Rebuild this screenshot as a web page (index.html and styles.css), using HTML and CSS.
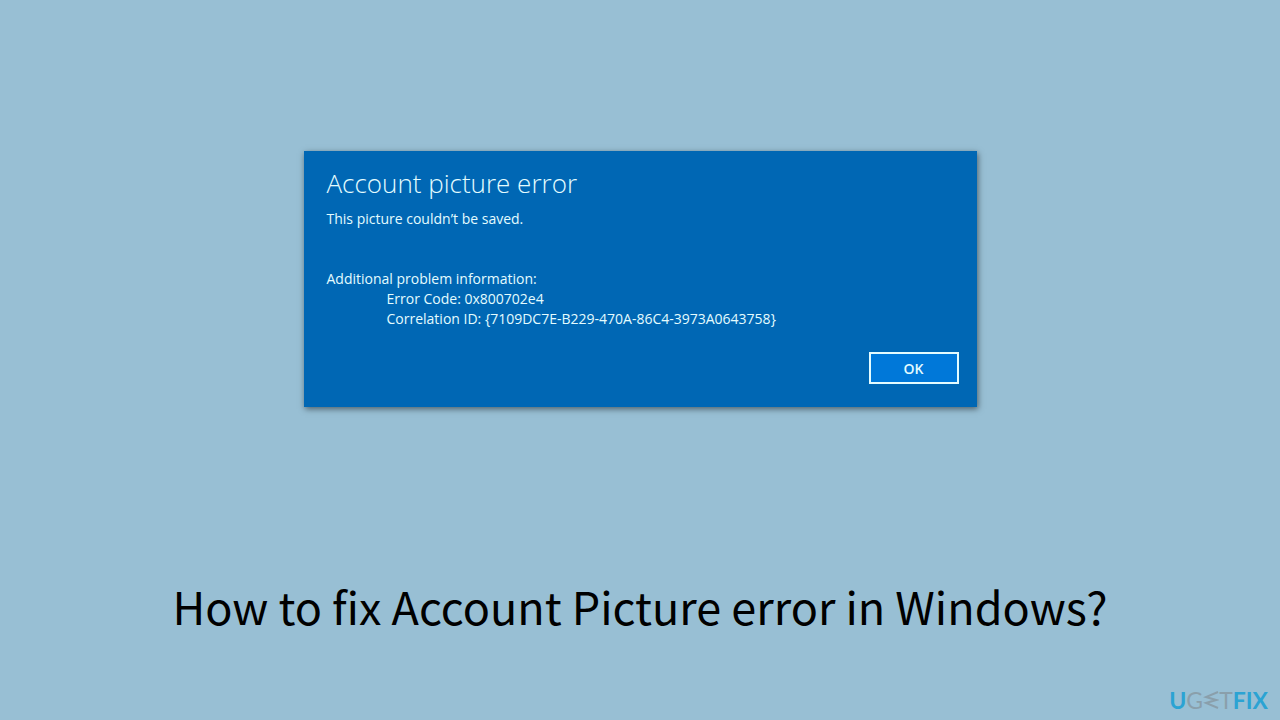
FILE: index.html
```html
<!DOCTYPE html>
<html lang="en">
<head>
  <meta charset="UTF-8">
  <meta name="viewport" content="width=device-width, initial-scale=1">
  <title>How to fix Account Picture error in Windows?</title>
  <link rel="stylesheet" href="styles.css">
</head>
<body>
  <main class="page">
    <section class="dialog" role="alertdialog" aria-labelledby="dialog-title" aria-describedby="dialog-message">
      <h2 class="dialog-title" id="dialog-title">Account picture error</h2>
      <p class="dialog-message" id="dialog-message">This picture couldn’t be saved.</p>
      <div class="details">
        <p>Additional problem information:</p>
        <ul class="details-list">
          <li>Error Code: 0x800702e4</li>
          <li>Correlation ID: {7109DC7E-B229-470A-86C4-3973A0643758}</li>
        </ul>
      </div>
      <div class="actions">
        <button type="button" class="ok-button">OK</button>
      </div>
    </section>
    <h1 class="headline">How to fix Account Picture error in Windows?</h1>
  </main>

  <footer class="footer">
    <div class="logo">
      <span>U</span><span class="logo-gray">G</span>
      <svg class="logo-mark" width="16" height="20" viewBox="0 0 16 20" role="img" aria-label="E">
        <path d="M15 2 L3 7 L13 10 L3 13 L15 18" fill="none" stroke="currentColor" stroke-width="2" />
      </svg>
      <span class="logo-gray">T</span><span>FIX</span>
    </div>
  </footer>
</body>
</html>
```

FILE: styles.css
```css
* {
  box-sizing: border-box;
}
body {
  display: flex;
  flex-direction: column;
  min-height: 100vh;
  margin: 0;
  font-family: "Open Sans", sans-serif;
  background-color: #98bfd4;
}
h1, h2, p, ul {
  margin: 0;
  padding: 0;
  font-weight: 400;
}
.page {
  display: flex;
  flex: 1;
  flex-direction: column;
  align-items: center;
  padding: 151px 24px 0;
}
.dialog {
  width: 100%;
  max-width: 673px;
  padding: 15px 18px 23px 23px;
  color: #e4fcff;
  background-color: #0067b4;
  box-shadow: 1px 2px 6px rgba(0, 0, 0, 0.5);
  font-size: 14px;
  line-height: 20px;
}
.dialog-title {
  margin-bottom: 9px;
  font-size: 26px;
  font-weight: 300;
  line-height: 34px;
}
.details {
  margin-top: 40px;
}
.details-list {
  padding-left: 60px;
  list-style: none;
}
.actions {
  display: flex;
  justify-content: flex-end;
  margin-top: 23px;
}
.ok-button {
  width: 90px;
  height: 32px;
  padding: 0;
  border: 2px solid #e4fcff;
  color: #e4fcff;
  background-color: #0078d9;
  font-family: inherit;
  font-size: 14px;
  font-weight: 600;
}
.headline {
  margin-top: 169px;
  color: #000000;
  font-family: "Noto Sans CJK SC", sans-serif;
  font-size: 45px;
  line-height: 60px;
  text-align: center;
}
.footer {
  display: flex;
  justify-content: flex-end;
  padding: 0 12px 8px;
}
.logo {
  display: flex;
  align-items: center;
  color: #2ba3d3;
  font-family: Lato, sans-serif;
  font-size: 23px;
  font-weight: 700;
  line-height: 24px;
}
.logo-gray, .logo-mark {
  color: #8a9fab;
  font-weight: 400;
}
```
